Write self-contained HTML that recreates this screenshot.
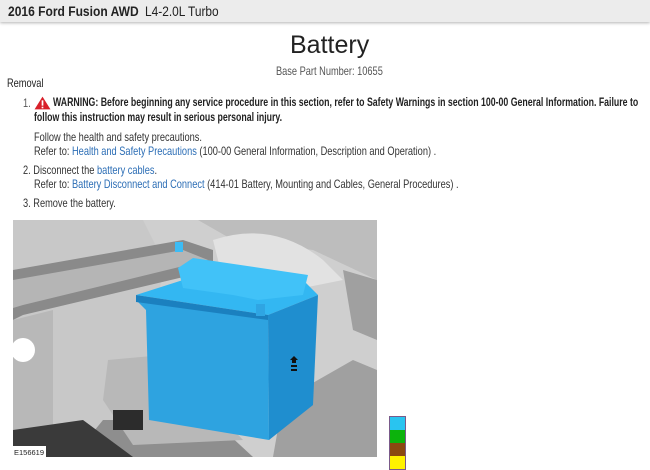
<!DOCTYPE html>
<html><head><meta charset="utf-8"><style>
*{margin:0;padding:0;box-sizing:border-box}
body{width:650px;height:470px;overflow:hidden;background:#fff;font-family:"Liberation Sans",sans-serif;color:#333;position:relative}
.hdr{position:absolute;left:0;top:0;width:650px;height:22px;background:#ececec;box-shadow:0 1px 3px rgba(0,0,0,.3)}
.a{color:#2b6db5}
.p{position:absolute;font-size:12px;white-space:nowrap;transform-origin:0 0;transform:scaleX(.77)}
.w{font-weight:bold;color:#222;font-size:12px;transform:scaleX(.73)}
</style></head><body>
<div class="hdr"></div>
<div class="p" style="left:8px;top:3px;font-size:14px;font-weight:bold;color:#222;transform:scaleX(.86)">2016 Ford Fusion AWD</div>
<div class="p" style="left:145px;top:3px;font-size:14px;color:#222;transform:scaleX(.85)">L4-2.0L Turbo</div>
<div class="p" style="left:290px;top:31px;font-size:25px;color:#222;transform:none">Battery</div>
<div class="p" style="left:276px;top:64px;color:#555">Base Part Number: 10655</div>
<div class="p" style="left:7px;top:76px;color:#222">Removal</div>
<div class="p" style="left:23px;top:96px;color:#555">1.</div>
<svg style="position:absolute;left:34px;top:96px" width="17" height="14" viewBox="0 0 16 13"><path d="M8 0.5L15.5 12.5H0.5Z" fill="#d8202a"/><rect x="7.2" y="4" width="1.6" height="5" fill="#fff"/><rect x="7.2" y="10" width="1.6" height="1.5" fill="#fff"/></svg>
<div class="p w" style="left:53px;top:95px">WARNING: Before beginning any service procedure in this section, refer to Safety Warnings in section 100-00 General Information. Failure to</div>
<div class="p w" style="left:34px;top:110px">follow this instruction may result in serious personal injury.</div>
<div class="p" style="left:34px;top:130px">Follow the health and safety precautions.</div>
<div class="p" style="left:34px;top:144px">Refer to: <span class="a">Health and Safety Precautions</span> (100-00 General Information, Description and Operation) .</div>
<div class="p" style="left:23px;top:163px">2. Disconnect the <span class="a">battery cables</span>.</div>
<div class="p" style="left:34px;top:177px">Refer to: <span class="a">Battery Disconnect and Connect</span> (414-01 Battery, Mounting and Cables, General Procedures) .</div>
<div class="p" style="left:23px;top:196px">3. Remove the battery.</div>
<svg style="position:absolute;left:13px;top:220px" width="364" height="237" viewBox="0 0 364 237">
<rect width="364" height="237" fill="#cfcfcf"/>
<path d="M0 0H130L150 40 130 237H0Z" fill="#c8c8c8"/>
<path d="M0 50L170 20 200 30 200 50 10 95 0 100Z" fill="#8a8a8a"/>
<path d="M0 60L170 30 195 40 10 85 0 88Z" fill="#b5b5b5"/>
<path d="M185 0H364V60L300 30 220 20Z" fill="#bdbdbd"/>
<path d="M200 20Q260 0 310 40L330 60 280 70 210 60Z" fill="#e2e2e2"/>
<path d="M330 50L364 60V120L340 110Z" fill="#a0a0a0"/>
<path d="M0 100L40 90 40 237H0Z" fill="#b8b8b8"/>
<circle cx="10" cy="130" r="12" fill="#fff"/>
<path d="M90 200L200 200 240 237H60Z" fill="#8e8e8e"/>
<path d="M0 210L70 200 120 237H0Z" fill="#3a3a3a"/>
<path d="M270 180L340 140 364 150 364 237 260 237Z" fill="#a0a0a0"/>
<path d="M95 140L150 135 230 220 120 225 90 180Z" fill="#b8b8b8"/>
<rect x="100" y="190" width="30" height="20" fill="#2c2c2c"/>
<path d="M123 80L255 95 256 220 136 200 133 90Z" fill="#2ea3e0"/>
<path d="M123 75L170 60 178 45 290 60 305 75 255 95Z" fill="#33b7f2"/>
<path d="M255 95L305 75 300 185 256 220Z" fill="#1f8ecf"/>
<path d="M165 48L180 38 295 55 290 75 245 80 220 75 170 68Z" fill="#41c2f8"/>
<path d="M123 75L255 95 255 100 123 82Z" fill="#1b80bf"/>
<rect x="162" y="22" width="8" height="10" fill="#3cbcf5"/>
<rect x="243" y="84" width="9" height="12" fill="#2fa5e3"/>
<path d="M277 140l4-4 4 4h-2v3h-4v-3z M278 145h6v2h-6z M278 149h6v2h-6z" fill="#111"/>
<rect x="0" y="226" width="33" height="11" fill="#fff"/>
<text x="1" y="235" font-size="7.5" font-family="Liberation Sans,sans-serif" fill="#222">E156619</text>
</svg>
<div style="position:absolute;left:389px;top:416px;width:17px;height:54px;border:1px solid #7a5a8a">
<div style="height:13px;background:#29c4f0"></div><div style="height:13px;background:#0cb30c"></div><div style="height:13px;background:#8b4a10"></div><div style="height:13px;background:#fff200"></div></div>
</body></html>
